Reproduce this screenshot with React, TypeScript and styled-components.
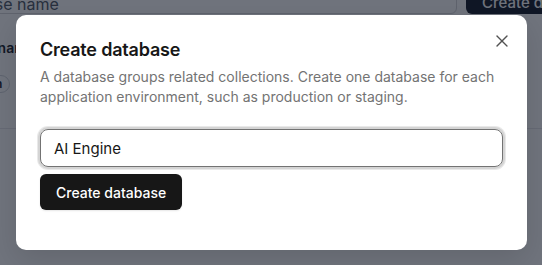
import React from "react";
import styled, { createGlobalStyle } from "styled-components";

const GlobalStyle = createGlobalStyle`
  html, body { margin: 0; padding: 0; }
  body {
    font-family: Inter, "Noto Sans", "Liberation Sans", sans-serif;
    overflow: hidden;
    background: #ffffff;
  }
  * { box-sizing: border-box; }
`;

const Page = styled.div`
  position: relative;
  width: 542px;
  height: 265px;
  overflow: hidden;
  background: #ffffff;
`;

const PageInner = styled.div`
  margin: -22px 0 0 -72px;
  display: flex;
  flex-direction: column;
`;

const TopBar = styled.div`
  display: flex;
  align-items: flex-start;
  gap: 9px;
`;

const SearchInput = styled.div`
  width: 529px;
  height: 36px;
  border: 1px solid #d4d4d8;
  border-radius: 6px;
  padding: 15px 12px 0;
  font-size: 16px;
  line-height: 20px;
  color: #4b5563;
  flex-shrink: 0;
  white-space: nowrap;
`;

const TopButton = styled.div`
  height: 36px;
  padding: 15px 16px 0;
  background: #111827;
  color: #ffffff;
  font-size: 15px;
  line-height: 20px;
  font-weight: 500;
  border-radius: 6px;
  white-space: nowrap;
  flex-shrink: 0;
`;

const ListSection = styled.div`
  margin: 24px 0 0 2px;
  display: flex;
  flex-direction: column;
`;

const ListHeader = styled.div`
  font-size: 14px;
  line-height: 20px;
  font-weight: 600;
  color: #111827;
  white-space: nowrap;
`;

const ListRow = styled.div`
  padding: 14px 0 35px;
  border-bottom: 1px solid #e5e7eb;
  width: 700px;
`;

const Badge = styled.span`
  display: inline-block;
  border: 1px solid #d1d5db;
  border-radius: 999px;
  padding: 1px 7px 1px 8px;
  font-size: 12px;
  line-height: 14px;
  font-weight: 600;
  color: #111827;
  white-space: nowrap;
`;

const Overlay = styled.div`
  position: absolute;
  inset: 0;
  background: rgba(17, 24, 39, 0.6);
  display: flex;
  align-items: flex-start;
  padding: 15px 0 0 16px;
`;

const Modal = styled.div`
  position: relative;
  width: 511px;
  height: 235px;
  background: #ffffff;
  border-radius: 10px;
  padding: 21px 24px 40px;
  box-shadow: 0 10px 30px rgba(0, 0, 0, 0.12);
  display: flex;
  flex-direction: column;
`;

const Title = styled.h2`
  margin: 0;
  font-size: 18px;
  line-height: 28px;
  font-weight: 600;
  color: #171717;
  letter-spacing: -0.2px;
`;

const Description = styled.p`
  margin: 3px 0 0;
  font-size: 14px;
  line-height: 20px;
  color: #737373;
`;

const CloseButton = styled.button`
  position: absolute;
  top: 16px;
  right: 15px;
  width: 20px;
  height: 20px;
  padding: 0;
  border: none;
  background: transparent;
  color: #525252;
  display: flex;
  align-items: center;
  justify-content: center;
`;

const Form = styled.div`
  margin-top: 22px;
  display: flex;
  flex-direction: column;
  align-items: flex-start;
  gap: 7px;
`;

const TextInput = styled.div`
  width: 463px;
  height: 38px;
  border: 1px solid #737373;
  border-radius: 8px;
  box-shadow: 0 0 0 2px #d4d4d4, 0 0 0 3px rgba(212, 212, 212, 0.5);
  padding: 0 13px;
  display: flex;
  align-items: center;
  font-size: 15px;
  color: #171717;
`;

const PrimaryButton = styled.button`
  height: 36px;
  padding: 0 16px;
  border: none;
  border-radius: 6px;
  background: #171717;
  color: #ffffff;
  font-family: inherit;
  font-size: 14px;
  font-weight: 500;
  box-shadow: 0 1px 2px rgba(0, 0, 0, 0.1);
`;

export default function App() {
  return (
    <>
      <GlobalStyle />
      <Page>
        <PageInner>
          <TopBar>
            <SearchInput>Database name</SearchInput>
            <TopButton>Create database</TopButton>
          </TopBar>
          <ListSection>
            <ListHeader>Database name</ListHeader>
            <ListRow>
              <Badge>Production</Badge>
            </ListRow>
          </ListSection>
        </PageInner>
        <Overlay>
          <Modal>
            <Title>Create database</Title>
            <Description>
              A database groups related collections. Create one database for each
              application environment, such as production or staging.
            </Description>
            <CloseButton aria-label="Close">
              <svg width="20" height="20" viewBox="0 0 24 24" fill="none" stroke="currentColor" strokeWidth="1.6" strokeLinecap="round">
                <path d="M18 6 6 18" />
                <path d="m6 6 12 12" />
              </svg>
            </CloseButton>
            <Form>
              <TextInput>AI Engine</TextInput>
              <PrimaryButton>Create database</PrimaryButton>
            </Form>
          </Modal>
        </Overlay>
      </Page>
    </>
  );
}
